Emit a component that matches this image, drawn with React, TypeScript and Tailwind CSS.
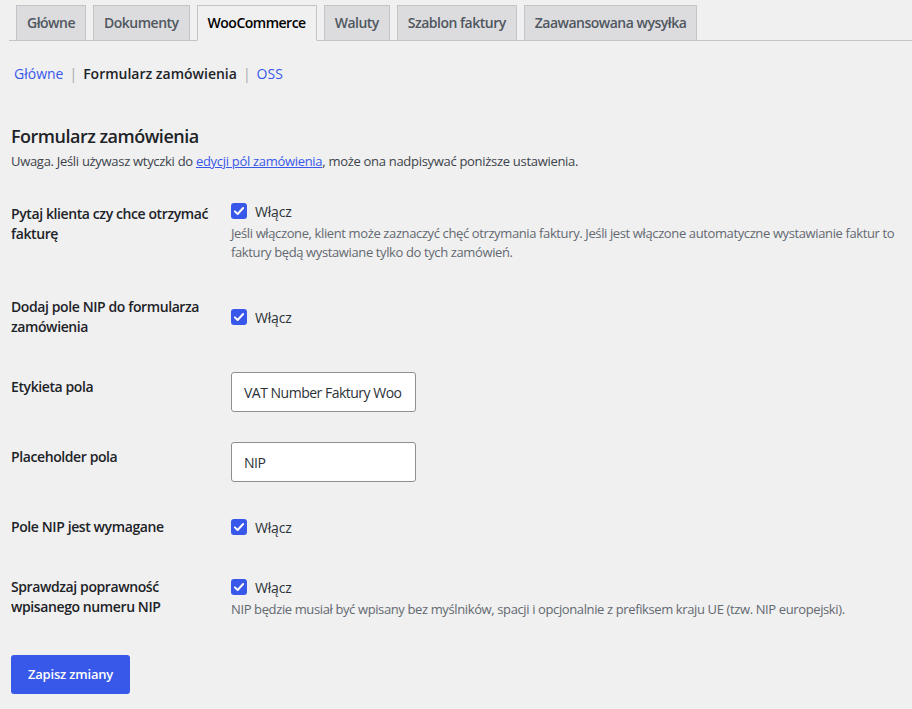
const tabs = ["Główne", "Dokumenty", "WooCommerce", "Waluty", "Szablon faktury", "Zaawansowana wysyłka"];

function Check() {
  return (
    <span className="flex h-4 w-4 shrink-0 items-center justify-center rounded-[3px] bg-[#3858e9]">
      <svg viewBox="0 0 16 16" className="h-3 w-3" fill="none">
        <path d="M2.5 8.5 6.2 12 13.5 4" stroke="#fff" strokeWidth="2.6" strokeLinecap="round" strokeLinejoin="round" />
      </svg>
    </span>
  );
}

function Toggle({ desc }: { desc?: string }) {
  return (
    <div>
      <label className="flex h-6 items-center gap-2 text-[14px] tracking-[-0.2px] text-[#2c3338]">
        <Check />
        <span>Włącz</span>
      </label>
      {desc ? <p className="mt-[1px] text-[13px] leading-[19px] tracking-[-0.38px] text-[#646970]">{desc}</p> : null}
    </div>
  );
}

function Row({ label, children }: { label: string; children: React.ReactNode }) {
  return (
    <div className="flex">
      <div className="w-[220px] shrink-0 py-5 pr-[10px] text-[14px] font-semibold leading-5 tracking-[-0.4px] text-[#1d2327]">{label}</div>
      <div className="flex flex-1 flex-col justify-center py-[15px]">{children}</div>
    </div>
  );
}

function TextInput({ value }: { value: string }) {
  return (
    <input
      readOnly
      value={value}
      className="h-10 w-[185px] rounded-[3px] border border-[#8c8f94] bg-white px-3 text-[14px] tracking-[-0.5px] text-[#2c3338] outline-none"
    />
  );
}

export default function App() {
  return (
    <div className="min-h-[709px] bg-[#f0f0f1] font-['Open_Sans',sans-serif] text-[#3c434a]">
      {/* zakładki */}
      <div className="ml-[9px] flex h-[41px] items-end border-b border-[#c3c4c7] pl-[7px]">
        {tabs.map((t) => {
          const active = t === "WooCommerce";
          return (
            <div
              key={t}
              className={
                active
                  ? "-mb-px mr-[7px] border border-b-[#f0f0f1] border-[#c3c4c7] bg-[#f0f0f1] px-[10px] py-[5px] text-[14px] font-semibold leading-6 tracking-[-0.5px] text-black"
                  : "mr-[7px] border border-b-0 border-[#c3c4c7] bg-[#dcdcde] px-[10px] py-[5px] text-[14px] font-semibold leading-6 tracking-[-0.5px] text-[#50575e]"
              }
            >
              {t}
            </div>
          );
        })}
      </div>

      <div className="pl-[11px] pr-[2px]">
        <div className="mt-[23px] flex items-center gap-[6px] pl-[3px] text-[14px] leading-5">
          <span className="text-[#3858e9]">Główne</span>
          <span className="text-[#a7aaad]">|</span>
          <span className="font-semibold text-[#1d2327]">Formularz zamówienia</span>
          <span className="text-[#a7aaad]">|</span>
          <span className="text-[#3858e9]">OSS</span>
        </div>

        <h2 className="mt-[40px] text-[18px] font-semibold leading-6 tracking-[-0.5px] text-[#1d2327]">Formularz zamówienia</h2>
        <p className="mt-[3px] text-[13px] leading-5 tracking-[-0.3px] text-[#3c434a]">
          Uwaga. Jeśli używasz wtyczki do{" "}
          <span className="text-[#3858e9] underline">edycji pól zamówienia</span>, może ona nadpisywać poniższe ustawienia.
        </p>

        <div className="mt-[13px]">
          <Row label="Pytaj klienta czy chce otrzymać fakturę">
            <Toggle desc="Jeśli włączone, klient może zaznaczyć chęć otrzymania faktury. Jeśli jest włączone automatyczne wystawianie faktur to faktury będą wystawiane tylko do tych zamówień." />
          </Row>
          <Row label="Dodaj pole NIP do formularza zamówienia">
            <Toggle />
          </Row>
          <Row label="Etykieta pola">
            <TextInput value="VAT Number Faktury Woo" />
          </Row>
          <Row label="Placeholder pola">
            <TextInput value="NIP" />
          </Row>
          <Row label="Pole NIP jest wymagane">
            <Toggle />
          </Row>
          <Row label="Sprawdzaj poprawność wpisanego numeru NIP">
            <Toggle desc="NIP będzie musiał być wpisany bez myślników, spacji i opcjonalnie z prefiksem kraju UE (tzw. NIP europejski)." />
          </Row>
        </div>

        <button className="mt-[18px] h-[39px] rounded-[3px] bg-[#3858e9] px-[17px] text-[13px] font-semibold tracking-[-0.2px] text-white">
          Zapisz zmiany
        </button>
      </div>
    </div>
  );
}
